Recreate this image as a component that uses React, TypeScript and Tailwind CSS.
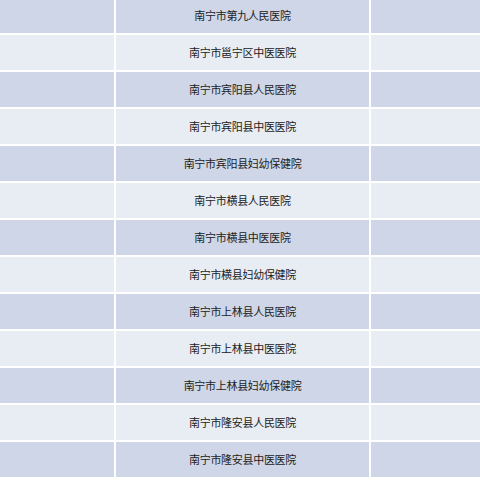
import React from "react";

const rows = [
  "南宁市第九人民医院",
  "南宁市邕宁区中医医院",
  "南宁市宾阳县人民医院",
  "南宁市宾阳县中医医院",
  "南宁市宾阳县妇幼保健院",
  "南宁市横县人民医院",
  "南宁市横县中医医院",
  "南宁市横县妇幼保健院",
  "南宁市上林县人民医院",
  "南宁市上林县中医医院",
  "南宁市上林县妇幼保健院",
  "南宁市隆安县人民医院",
  "南宁市隆安县中医医院",
];

export default function App() {
  return (
    <div className="w-[480px] h-[480px] overflow-hidden bg-white">
      <div className="-mt-[2px] flex flex-col gap-[2px]">
        {rows.map((name, i) => {
          const bg = i % 2 === 0 ? "bg-[#cfd6e7]" : "bg-[#e8ecf3]";
          return (
            <div key={i} className="flex h-[35px] gap-[2px]">
              <div className={`w-[114px] ${bg}`} />
              <div
                className={`w-[253px] ${bg} flex items-center justify-center text-[11px] tracking-[-0.3px] text-[#222222]`}
                style={{ fontFamily: '"Noto Sans CJK SC", "Noto Sans", sans-serif' }}
              >
                {name}
              </div>
              <div className={`flex-1 ${bg}`} />
            </div>
          );
        })}
      </div>
    </div>
  );
}
